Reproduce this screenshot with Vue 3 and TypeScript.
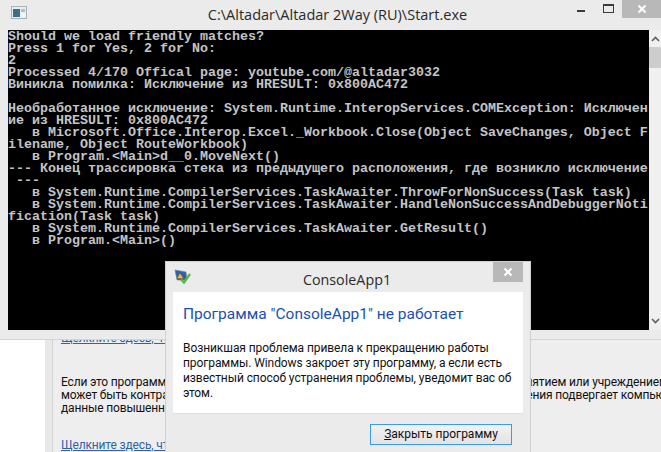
<script setup lang="ts">
const lines: string[] = [
  'Should we load friendly matches?',
  'Press 1 for Yes, 2 for No:',
  '2',
  'Processed 4/170 Offical page: youtube.com/@altadar3032',
  'Виникла помилка: Исключение из HRESULT: 0x800AC472',
  '',
  'Необработанное исключение: System.Runtime.InteropServices.COMException: Исключен',
  'ие из HRESULT: 0x800AC472',
  '   в Microsoft.Office.Interop.Excel._Workbook.Close(Object SaveChanges, Object F',
  'ilename, Object RouteWorkbook)',
  '   в Program.<Main>d__0.MoveNext()',
  '--- Конец трассировка стека из предыдущего расположения, где возникло исключение',
  ' ---',
  '   в System.Runtime.CompilerServices.TaskAwaiter.ThrowForNonSuccess(Task task)',
  '   в System.Runtime.CompilerServices.TaskAwaiter.HandleNonSuccessAndDebuggerNoti',
  'fication(Task task)',
  '   в System.Runtime.CompilerServices.TaskAwaiter.GetResult()',
  '   в Program.<Main>()',
]
</script>

<template>
  <div class="screen">
    <section class="console">
      <header class="titlebar">
        <svg class="app-icon" width="16" height="13" viewBox="0 0 16 13">
          <rect x="0.5" y="0.5" width="15" height="12" fill="#e8eef0" stroke="#a9b4b8" />
          <rect x="2" y="3" width="7" height="8" fill="#3d6f88" />
          <rect x="10" y="3" width="4" height="3" fill="#a8c4d0" />
          <rect x="10" y="7" width="4" height="4" fill="#f4f6f6" />
        </svg>
        <span class="title">C:\Altadar\Altadar 2Way (RU)\Start.exe</span>
        <div class="controls">
          <span class="min"></span>
          <span class="max"></span>
          <span class="close">
            <svg width="10" height="10" viewBox="0 0 10 10">
              <path d="M1.5 1.5 L8.5 8.5 M8.5 1.5 L1.5 8.5" stroke="#fff" stroke-width="2" />
            </svg>
          </span>
        </div>
      </header>
      <div class="client">
        <div class="output">
          <div v-for="(line, i) in lines" :key="i" class="line">{{ line }}</div>
        </div>
        <div class="scrollbar">
          <svg class="arrow" width="9" height="6" viewBox="0 0 9 6">
            <path d="M1 5 L4.5 1.5 L8 5" fill="none" stroke="#606060" stroke-width="1.6" />
          </svg>
          <div class="thumb"></div>
          <svg class="arrow down" width="9" height="6" viewBox="0 0 9 6">
            <path d="M1 1 L4.5 4.5 L8 1" fill="none" stroke="#606060" stroke-width="1.6" />
          </svg>
        </div>
      </div>
    </section>

    <section class="behind">
      <div class="white"></div>
      <div class="strip"></div>
      <div class="page">
        <a class="link clipped">Щелкните здесь, чтобы получить дополнительные сведения</a>
        <div class="para">
          <p>Если это программное обеспечение было предоставлено именно же вашим предприятием или учреждением</p>
          <p>может быть контрактами запрещено, а его дальнейшее использование или выполнения подвергает компьютер</p>
          <p>данные повышенной опасности.</p>
        </div>
        <a class="link">Щелкните здесь, чтобы получить дополнительные сведения</a>
      </div>
    </section>

    <div class="dialog">
      <header class="dlg-title">
        <svg class="dlg-icon" width="17" height="15" viewBox="0 0 17 15">
          <path d="M1 1 L12 3 L13 11 L3 11 Z" fill="#2f5fb0" stroke="#6a7f9f" stroke-width="0.6" />
          <path d="M6 4 L9.5 9.5 L3 9.5 Z" fill="#f2c230" stroke="#6b5a10" stroke-width="0.5" />
          <path d="M7 10.5 L10 13.5 L16 5" fill="none" stroke="#58b848" stroke-width="2.4" />
        </svg>
        <span class="dlg-name">ConsoleApp1</span>
        <span class="dlg-close">
          <svg width="10" height="10" viewBox="0 0 10 10">
            <path d="M1.5 1.5 L8.5 8.5 M8.5 1.5 L1.5 8.5" stroke="#fff" stroke-width="2" />
          </svg>
        </span>
      </header>
      <div class="dlg-body">
        <h1>Программа "ConsoleApp1" не работает</h1>
        <p>Возникшая проблема привела к прекращению работы программы. Windows закроет эту программу, а если есть известный способ устранения проблемы, уведомит вас об этом.</p>
      </div>
      <footer class="dlg-foot">
        <button class="dlg-btn"><u>З</u>акрыть программу</button>
      </footer>
    </div>
  </div>
</template>

<style>
html, body { margin: 0; padding: 0; overflow: hidden; }
</style>

<style scoped>
.screen {
  position: relative;
  width: 661px;
  height: 452px;
  overflow: hidden;
  background: #fff;
  font-family: Roboto, "Noto Sans", sans-serif;
}
.console {
  height: 339px;
  background: #ebebeb;
  border-bottom: 1px solid #d4d4d4;
  display: flex;
  flex-direction: column;
}
.titlebar {
  position: relative;
  height: 30px;
  flex: none;
  display: flex;
  justify-content: center;
  box-sizing: border-box;
  padding: 5px 0 0 14px;
  font-family: "Open Sans", sans-serif;
}
.app-icon { position: absolute; left: 11px; top: 6px; }
.title {
  font-size: 14.5px;
  line-height: 20px;
  color: #2a2a2a;
  white-space: nowrap;
}
.controls {
  position: absolute;
  right: 0;
  top: 0;
  display: flex;
  align-items: flex-start;
}
.min {
  width: 8px;
  height: 2px;
  margin: 10px 18px 0 0;
  background: #3a3a3a;
}
.max {
  width: 9px;
  height: 6px;
  border: 1px solid #3a3a3a;
  border-top-width: 2px;
  margin: 4px 8px 0 0;
}
.close {
  width: 39px;
  height: 18px;
  background: #b8b8b8;
  display: flex;
  align-items: center;
  justify-content: center;
}
.client {
  display: flex;
  height: 300px;
  margin-left: 8px;
}
.output {
  width: 641px;
  height: 300px;
  box-sizing: border-box;
  padding-top: 1px;
  background: #000;
  overflow: hidden;
  color: #c4c4c4;
  font-family: "Liberation Mono", monospace;
  font-size: 13.333px;
  font-weight: bold;
  line-height: 12px;
}
.line {
  height: 12px;
  white-space: pre;
}
.scrollbar {
  width: 12px;
  background: #f0f0f0;
  display: flex;
  flex-direction: column;
  align-items: center;
  box-sizing: border-box;
  padding-top: 6px;
  padding-bottom: 6px;
}
.arrow { flex: none; }
.thumb {
  width: 12px;
  height: 21px;
  margin-top: 5px;
  background: #cdcdcd;
}
.arrow.down { margin-top: auto; }
.behind {
  display: flex;
  height: 112px;
}
.white {
  width: 45px;
  background: #fff;
  flex: none;
}
.strip {
  width: 7px;
  flex: none;
  background: #e8e8e8;
  border-right: 1px solid #d2d2d2;
}
.page {
  flex: 1;
  min-width: 0;
  background: #eeeeee;
  box-sizing: border-box;
  padding-left: 8px;
  overflow: hidden;
  font-size: 12px;
  letter-spacing: -0.15px;
  line-height: 13px;
  color: #111;
  white-space: nowrap;
}
.link {
  display: block;
  color: #2f62a8;
  text-decoration: underline;
}
.clipped { margin-top: -8px; }
.para { margin-top: 31px; }
.para p { margin: 0; }
.para + .link { margin-top: 24px; }
.dialog {
  position: absolute;
  left: 165px;
  top: 261px;
  width: 366px;
  height: 191px;
  box-sizing: border-box;
  padding: 0 7px;
  background: #ebebeb;
  border: 1px solid #d0d0d0;
  border-bottom: 0;
}
.dlg-title {
  position: relative;
  height: 30px;
  display: flex;
  justify-content: center;
  align-items: center;
  font-family: "Open Sans", sans-serif;
}
.dlg-icon { position: absolute; left: 1px; top: 7px; }
.dlg-name {
  font-size: 14.3px;
  color: #2a2a2a;
  margin-top: 4px;
  margin-right: 2px;
}
.dlg-close {
  position: absolute;
  right: 0;
  top: 0;
  width: 30px;
  height: 20px;
  background: #b8b8b8;
  display: flex;
  align-items: center;
  justify-content: center;
}
.dlg-body {
  height: 122px;
  box-sizing: border-box;
  background: #fff;
  padding: 11px 10px 0;
  border-bottom: 1px solid #dfdfdf;
}
.dlg-body h1 {
  margin: 0;
  font-size: 15.5px;
  font-weight: 400;
  line-height: 22px;
  color: #1c50b0;
}
.dlg-body p {
  margin: 16px 0 0;
  font-size: 12px;
  letter-spacing: -0.08px;
  line-height: 15px;
  color: #111;
}
.dlg-foot {
  display: flex;
  justify-content: flex-end;
  padding: 10px 11px 0 0;
}
.dlg-btn {
  width: 142px;
  height: 21px;
  box-sizing: border-box;
  padding: 0;
  border: 1px solid #3c9be8;
  background: linear-gradient(#f2f2f2, #e3e3e3);
  font-family: inherit;
  font-size: 12px;
  line-height: 17px;
  color: #111;
}
</style>
